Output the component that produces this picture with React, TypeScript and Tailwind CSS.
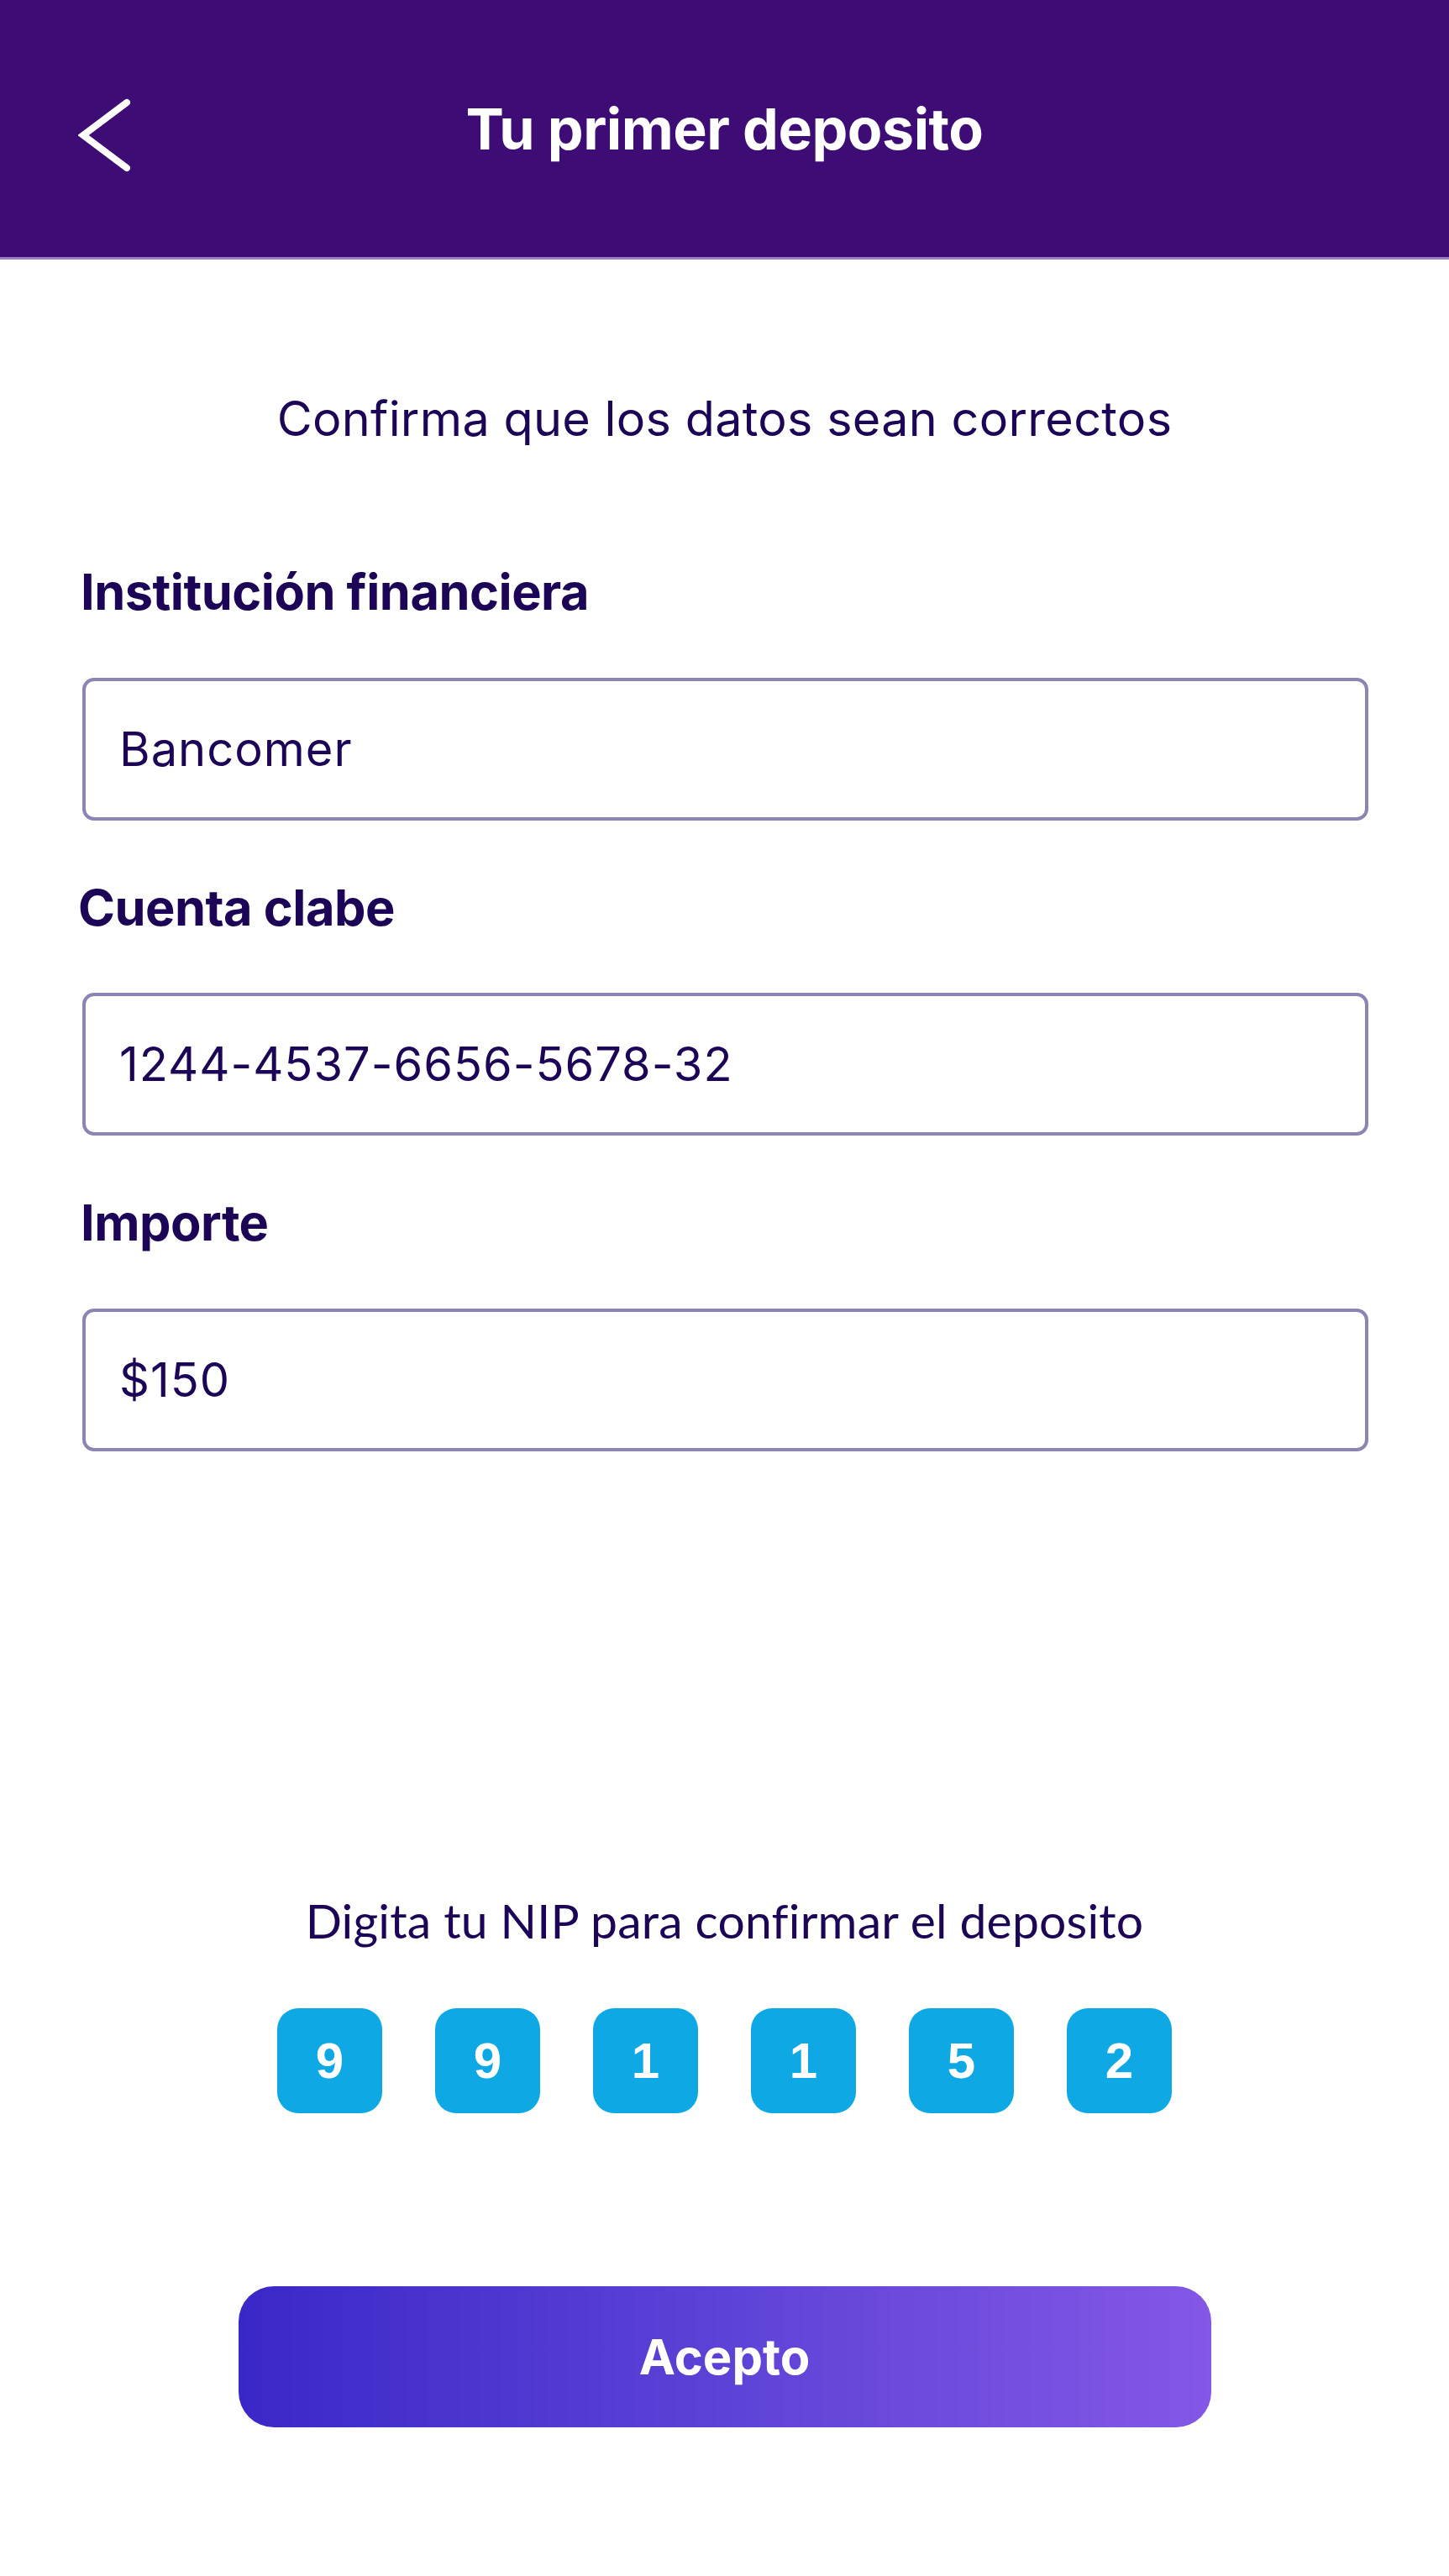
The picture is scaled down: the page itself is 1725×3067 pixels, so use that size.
import React from 'react';

const fields = [
  { label: 'Institución financiera', value: 'Bancomer' },
  { label: 'Cuenta clabe', value: '1244-4537-6656-5678-32' },
  { label: 'Importe', value: '$150' },
];

const pin = ['9', '9', '1', '1', '5', '2'];

const App = () => {
  return (
    <div className="min-h-[3067px] w-full bg-white font-['Inter',sans-serif] text-[#1c0557]">
      {/* Header */}
      <header className="relative flex h-[309px] items-center justify-center border-b-[3px] border-[#9a7cc6] bg-[#3d0c74]">
        <button className="absolute left-[93px] top-[116px] p-0" aria-label="Volver">
          <svg width="66" height="90" viewBox="0 0 66 90" fill="none">
            <path d="M58 6 L6 45 L58 84" stroke="white" strokeWidth="8" strokeLinecap="round" strokeLinejoin="miter" />
          </svg>
        </button>
        <h1 className="text-[68px] font-bold tracking-[-0.5px] text-white">Tu primer deposito</h1>
      </header>

      <main className="flex flex-col">
        <p className="mt-[146px] text-center text-[57.5px] tracking-[0.3px]">Confirma que los datos sean correctos</p>

        <div className="mt-[134px] flex flex-col pl-[96px] pr-[96px]">
          {fields.map((f, i) => (
            <div key={f.label} className={i === 0 ? '' : 'mt-[74px]'}>
              <h2 className={`text-[59.5px] font-bold leading-none tracking-[-0.5px] ${i === 1 ? '-ml-[3px]' : ''}`}>{f.label}</h2>
              <div className="ml-[2px] mt-[72px] flex h-[170px] items-center rounded-[14px] border-[4px] border-[#8d84b3] px-[40px]">
                <span className="text-[56px] tracking-[1px]">{f.value}</span>
              </div>
            </div>
          ))}
        </div>

        <p className="mt-[516px] text-center font-['Lato',sans-serif] text-[57px] tracking-[0.2px]">
          Digita tu NIP para confirmar el deposito
        </p>

        <div className="mt-[62px] flex justify-center gap-[63px]">
          {pin.map((d, i) => (
            <div
              key={i}
              className="flex h-[125px] w-[125px] items-center justify-center rounded-[25px] bg-[#0ea8e4] font-['Liberation_Sans',sans-serif] text-[60px] font-bold text-white"
            >
              {d}
            </div>
          ))}
        </div>

        <div className="mt-[206px] flex justify-center">
          <button className="h-[168px] w-[1158px] rounded-[42px] bg-gradient-to-r from-[#3a27c7] to-[#8457e6] text-[58px] font-bold text-white">
            Acepto
          </button>
        </div>
      </main>
    </div>
  );
};

export default App;
